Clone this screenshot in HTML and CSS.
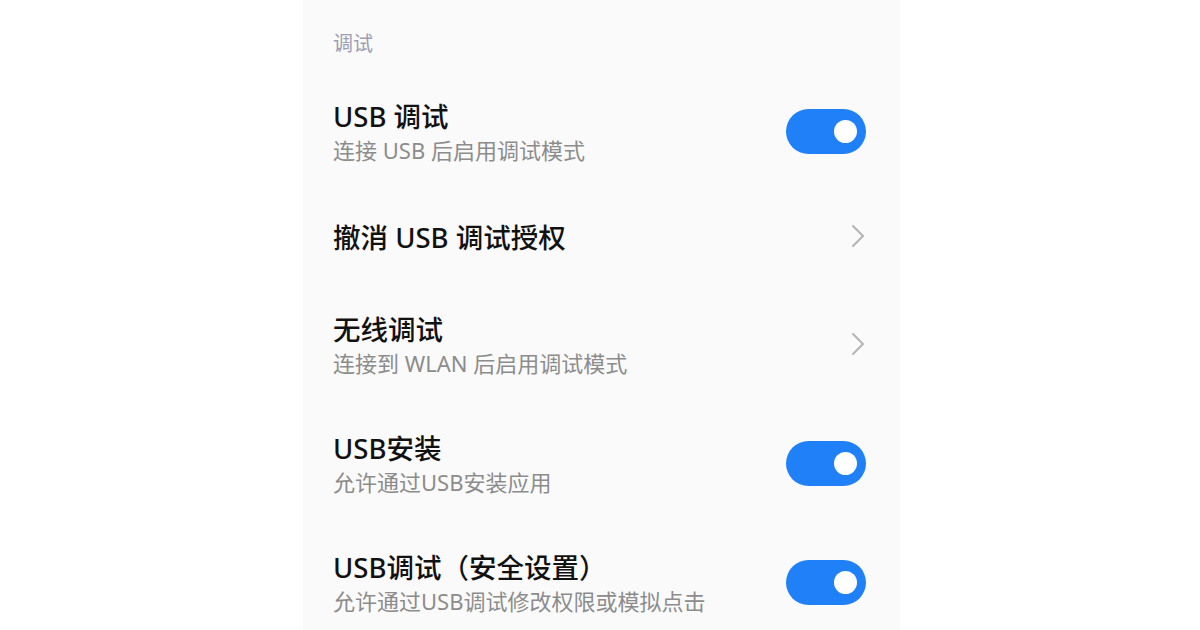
FILE: index.html
```html
<!DOCTYPE html>
<html lang="zh-CN">
<head>
<meta charset="utf-8">
<title>调试</title>
<link rel="stylesheet" href="styles.css">
</head>
<body>
<div class="panel">
  <div class="section-head">调试</div>

  <div class="row row-1">
    <div class="text">
      <div class="title">USB 调试</div>
      <div class="sub">连接 USB 后启用调试模式</div>
    </div>
    <div class="toggle on"><span class="knob"></span></div>
  </div>

  <div class="row row-2">
    <div class="text">
      <div class="title">撤消 USB 调试授权</div>
    </div>
    <svg class="chev" width="14" height="24" viewBox="0 0 14 24"><path d="M2 2 L12 12 L2 22" fill="none" stroke="#b4b4b4" stroke-width="2" stroke-linecap="round" stroke-linejoin="round"/></svg>
  </div>

  <div class="row row-3">
    <div class="text">
      <div class="title">无线调试</div>
      <div class="sub">连接到 WLAN 后启用调试模式</div>
    </div>
    <svg class="chev" width="14" height="24" viewBox="0 0 14 24"><path d="M2 2 L12 12 L2 22" fill="none" stroke="#b4b4b4" stroke-width="2" stroke-linecap="round" stroke-linejoin="round"/></svg>
  </div>

  <div class="row row-4">
    <div class="text">
      <div class="title">USB安装</div>
      <div class="sub">允许通过USB安装应用</div>
    </div>
    <div class="toggle on"><span class="knob"></span></div>
  </div>

  <div class="row row-5">
    <div class="text">
      <div class="title">USB调试（安全设置）</div>
      <div class="sub">允许通过USB调试修改权限或模拟点击</div>
    </div>
    <div class="toggle on"><span class="knob"></span></div>
  </div>
</div>
</body>
</html>
```

FILE: styles.css
```css
* { box-sizing: border-box; }
html, body {
  margin: 0;
  padding: 0;
  background: #ffffff;
  overflow: hidden;
}
body {
  width: 1200px;
  height: 630px;
  font-family: "Noto Sans", "Noto Sans CJK SC", sans-serif;
}
.panel {
  width: 597px;
  height: 630px;
  margin-left: 303px;
  background: #fafafa;
  padding: 0 34px 0 30px;
  display: flex;
  flex-direction: column;
  overflow: hidden;
}
.section-head {
  flex-shrink: 0;
  height: 79px;
  padding-top: 30px;
  font-size: 20px;
  line-height: 28px;
  color: #9d9db4;
}
.row {
  display: flex;
  align-items: center;
  justify-content: space-between;
  flex-shrink: 0;
}
.row-1 { height: 104px; }
.row-2 { height: 106px; }
.row-3 { height: 110px; }
.row-4 { height: 128px; }
.row-5 { height: 110px; }
.text {
  display: flex;
  flex-direction: column;
  padding-top: 3px;
}
.title {
  font-size: 27.5px;
  line-height: 34px;
  font-weight: 500;
  color: #111111;
}
.sub {
  font-size: 22px;
  line-height: 32px;
  color: #8c8c8c;
}
.toggle {
  width: 80px;
  height: 45px;
  border-radius: 23px;
  background: #1f80f7;
  display: flex;
  align-items: center;
  justify-content: flex-end;
  padding-right: 9px;
}
.knob {
  width: 23px;
  height: 23px;
  border-radius: 50%;
  background: #ffffff;
}
.chev {
  margin-right: 1px;
}
```
